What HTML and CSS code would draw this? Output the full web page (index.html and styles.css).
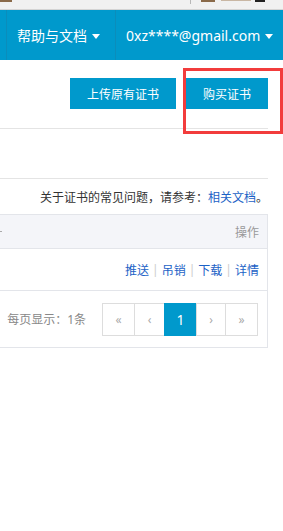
FILE: index.html
```html
<!DOCTYPE html>
<html lang="zh-CN">
<head>
  <meta charset="UTF-8">
  <title>证书管理</title>
  <link rel="stylesheet" href="styles.css">
</head>
<body>

  <div class="topbar">
    <span class="tb-bit tb-brown tb-first"></span>
    <span class="tb-line"></span>
    <span class="tb-bit tb-brown tb-mid"></span>
    <span class="tb-bit tb-color"></span>
    <span class="tb-bit tb-dark"></span>
  </div>

  <div class="nav">
    <div class="nav-edge"></div>
    <div class="nav-item nav-help">帮助与文档 <span class="caret"></span></div>
    <div class="nav-item">0xz****@gmail.com <span class="caret"></span></div>
  </div>

  <div class="main">
    <div class="toolbar">
      <button class="btn">上传原有证书</button>
      <div class="btn-wrap">
        <button class="btn">购买证书</button>
        <span class="highlight"></span>
      </div>
    </div>

    <div class="notice">关于证书的常见问题，请参考：<a href="#" class="link">相关文档</a>。</div>

    <div class="table">
      <div class="thead">
        <span class="th-cut"></span>
        <span class="th">操作</span>
      </div>
      <div class="trow">
        <a href="#" class="link">推送</a><span class="sep">|</span><a href="#" class="link">吊销</a><span class="sep">|</span><a href="#" class="link">下载</a><span class="sep">|</span><a href="#" class="link">详情</a>
      </div>
      <div class="tfoot">
        <span class="page-size">每页显示：1条</span>
        <ul class="pager">
          <li class="pg-first">«</li>
          <li class="pg-prev">‹</li>
          <li class="pg-active">1</li>
          <li class="pg-next">›</li>
          <li class="pg-last">»</li>
        </ul>
      </div>
    </div>
  </div>

</body>
</html>
```

FILE: styles.css
```css
body {
  margin: 0;
  width: 283px;
  overflow: hidden;
  background: #fff;
  font-family: "Noto Sans", "Noto Sans CJK SC", sans-serif;
  color: #333;
}

/* browser strip at the very top */
.topbar {
  height: 9px;
  background: #f1f1f1;
  border-bottom: 1px solid #d4d4d4;
  display: flex;
  align-items: flex-start;
}
.tb-bit { height: 2px; }
.tb-brown { background: #8a6a4a; }
.tb-first { width: 12px; }
.tb-line { width: 1px; height: 4px; background: #b8b8b8; margin-left: 178px; }
.tb-mid { width: 14px; margin-left: 10px; }
.tb-color { width: 30px; margin-left: 6px; background: #c9b7a4; height: 1px; }
.tb-dark { width: 10px; margin-left: 4px; background: #222; }

/* blue header */
.nav {
  height: 50px;
  background: #0099cc;
  display: flex;
  color: #fff;
  font-size: 14px;
}
.nav-edge {
  width: 6px;
  border-right: 1px solid #0b8dbb;
}
.nav-item {
  display: flex;
  align-items: center;
  padding: 0 0 0 10px;
  white-space: nowrap;
}
.nav-help {
  width: 98px;
  border-right: 1px solid #0b8dbb;
}
.caret {
  display: inline-block;
  margin-left: 5px;
  margin-top: 2px;
  border-left: 4px solid transparent;
  border-right: 4px solid transparent;
  border-top: 5px solid #fff;
}

.main {
  width: 268px;
}

.toolbar {
  display: flex;
  justify-content: flex-end;
  gap: 10px;
  padding: 18px 0 19px;
  border-bottom: 1px solid #e4e4e4;
}
.btn {
  height: 31px;
  padding: 0 17px;
  border: none;
  background: #0099cc;
  color: #fff;
  font-family: inherit;
  font-size: 12px;
  cursor: pointer;
}
.btn-wrap {
  position: relative;
  display: flex;
}
.highlight {
  position: absolute;
  top: -10px;
  left: -3px;
  right: -15px;
  bottom: -25px;
  border: 3px solid #f23c3c;
  pointer-events: none;
}

.notice {
  margin-top: 49px;
  border-top: 1px solid #e4e4e4;
  padding: 9px 0 6px;
  line-height: 20px;
  font-size: 12px;
  text-align: right;
  white-space: nowrap;
}
.link {
  color: #1c62c6;
  text-decoration: none;
}

.table {
  border-top: 1px solid #e3e5ea;
  border-right: 1px solid #e3e5ea;
  border-bottom: 1px solid #e3e5ea;
  font-size: 12px;
}
.thead {
  height: 33px;
  background: #f4f5f9;
  border-bottom: 1px solid #e3e5ea;
  display: flex;
  align-items: center;
  justify-content: space-between;
  padding-right: 8px;
  color: #999;
}
.th-cut {
  width: 2px;
  height: 1px;
  background: #aaa;
}
.trow {
  height: 41px;
  border-bottom: 1px solid #e3e5ea;
  display: flex;
  align-items: center;
  justify-content: flex-end;
  padding-right: 8px;
}
.sep {
  color: #ccc;
  margin: 0 3px;
}
.tfoot {
  height: 56px;
  display: flex;
  align-items: center;
  justify-content: flex-end;
  gap: 16px;
  padding-right: 9px;
}
.page-size {
  color: #888;
}
.pager {
  display: flex;
  margin: 0;
  padding: 0;
  list-style: none;
}
.pager li {
  height: 31px;
  border: 1px solid #ddd;
  margin-left: -1px;
  display: flex;
  align-items: center;
  justify-content: center;
  color: #aaa;
  font-size: 12px;
}
.pager .pg-first { width: 31px; margin-left: 0; }
.pager .pg-prev { width: 29px; }
.pager .pg-active {
  width: 31px;
  background: #0099cc;
  border-color: #0099cc;
  color: #fff;
  font-size: 14px;
}
.pager .pg-next { width: 28px; }
.pager .pg-last { width: 31px; }
```
